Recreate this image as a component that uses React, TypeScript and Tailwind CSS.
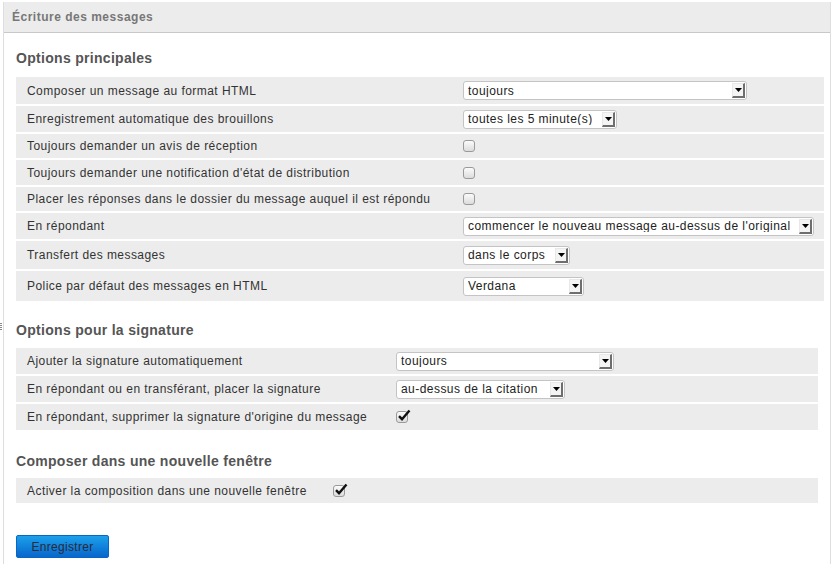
import React from "react";

// ─── Types ───────────────────────────────────────────────────────────────────

type Control =
  | { kind: "select"; value: string; width: number }
  | { kind: "checkbox"; checked: boolean };

interface Row {
  label: string;
  height: number;
  control: Control;
}

interface Section {
  title: string;
  labelWidth: number;
  tableWidth: number;
  rows: Row[];
}

const SECTIONS: Section[] = [
  {
    title: "Options principales",
    labelWidth: 446,
    tableWidth: 808,
    rows: [
      { label: "Composer un message au format HTML", height: 27, control: { kind: "select", value: "toujours", width: 284 } },
      { label: "Enregistrement automatique des brouillons", height: 26, control: { kind: "select", value: "toutes les 5 minute(s)", width: 154 } },
      { label: "Toujours demander un avis de réception", height: 24, control: { kind: "checkbox", checked: false } },
      { label: "Toujours demander une notification d'état de distribution", height: 25, control: { kind: "checkbox", checked: false } },
      { label: "Placer les réponses dans le dossier du message auquel il est répondu", height: 24, control: { kind: "checkbox", checked: false } },
      { label: "En répondant", height: 26, control: { kind: "select", value: "commencer le nouveau message au-dessus de l'original", width: 351 } },
      { label: "Transfert des messages", height: 28, control: { kind: "select", value: "dans le corps", width: 107 } },
      { label: "Police par défaut des messages en HTML", height: 30, control: { kind: "select", value: "Verdana", width: 121 } },
    ],
  },
  {
    title: "Options pour la signature",
    labelWidth: 379,
    tableWidth: 802,
    rows: [
      { label: "Ajouter la signature automatiquement", height: 26, control: { kind: "select", value: "toujours", width: 218 } },
      { label: "En répondant ou en transférant, placer la signature", height: 26, control: { kind: "select", value: "au-dessus de la citation", width: 169 } },
      { label: "En répondant, supprimer la signature d'origine du message", height: 26, control: { kind: "checkbox", checked: true } },
    ],
  },
  {
    title: "Composer dans une nouvelle fenêtre",
    labelWidth: 316,
    tableWidth: 802,
    rows: [
      { label: "Activer la composition dans une nouvelle fenêtre", height: 25, control: { kind: "checkbox", checked: true } },
    ],
  },
];

// ─── Controls ────────────────────────────────────────────────────────────────

function FakeSelect({ value, width }: { value: string; width: number }) {
  return (
    <div
      className="h-[19px] flex items-center bg-white border border-[#c4c4c4] rounded-[3px] pl-[4px] pr-[1px]"
      style={{ width }}
    >
      <span className="flex-1 text-[12px] tracking-[0.45px] leading-none text-[#222] whitespace-nowrap overflow-hidden">
        {value}
      </span>
      {/* 3D dropdown button */}
      <span className="w-[13px] h-[15px] shrink-0 flex items-center justify-center bg-[#f4f4f4] border-t border-l border-[#e8e8e8] border-r-2 border-b-2 border-r-[#6e6e6e] border-b-[#6e6e6e]">
        <svg width="7" height="4" viewBox="0 0 7 4" aria-hidden="true">
          <path d="M0 0h7L3.5 4z" fill="#000" />
        </svg>
      </span>
    </div>
  );
}

function FakeCheckbox({ checked }: { checked: boolean }) {
  return (
    <span className="relative w-[12px] h-[12px] block rounded-[3px] border border-[#9a9a9a] bg-gradient-to-b from-[#fbfbfb] to-[#dcdcdc]">
      {checked && (
        <svg
          className="absolute left-[0px] top-[-3px]"
          width="14"
          height="13"
          viewBox="0 0 14 13"
          aria-hidden="true"
        >
          <path d="M2 7.2 L5 10.2 L12.5 1.5" fill="none" stroke="#111" strokeWidth="2.4" strokeLinejoin="miter" />
        </svg>
      )}
    </span>
  );
}

// ─── Section table ───────────────────────────────────────────────────────────

function OptionsTable({ section }: { section: Section }) {
  return (
    <div className="flex flex-col gap-[2px]" style={{ width: section.tableWidth }}>
      {section.rows.map((row) => (
        <div key={row.label} className="flex items-center bg-[#ececec]" style={{ height: row.height }}>
          <div
            className="shrink-0 pl-[11px] text-[12px] tracking-[0.45px] text-[#333] whitespace-nowrap"
            style={{ width: section.labelWidth }}
          >
            {row.label}
          </div>
          <div className="flex-1 flex items-center pl-[1px]">
            {row.control.kind === "select" ? (
              <FakeSelect value={row.control.value} width={row.control.width} />
            ) : (
              <FakeCheckbox checked={row.control.checked} />
            )}
          </div>
        </div>
      ))}
    </div>
  );
}

// ─── App ─────────────────────────────────────────────────────────────────────

export default function App() {
  return (
    <div className="relative w-[834px] h-[564px] bg-white overflow-hidden pt-[2px] font-['Liberation_Sans',Arial,sans-serif]">
      {/* splitter grip */}
      <div className="absolute left-0 top-[323px] w-[2px] h-[7px] bg-[repeating-linear-gradient(to_bottom,#888_0,#888_1px,transparent_1px,transparent_2px)]" />

      <div className="ml-[3px] w-[828px] h-[562px] border-l border-r border-[#dedede]">
        {/* Panel header */}
        <div className="h-[31px] flex items-center pl-[8px] bg-[#ececec] border-b border-[#c8c8c8]">
          <span className="text-[12px] tracking-[0.5px] font-bold text-[#777]">Écriture des messages</span>
        </div>

        <div className="pl-[12px]">
          <h2 className="mt-[17px] mb-[11px] h-[16px] leading-[16px] text-[14px] tracking-[0.3px] font-bold text-[#555]">
            {SECTIONS[0].title}
          </h2>
          <OptionsTable section={SECTIONS[0]} />

          <h2 className="mt-[21px] mb-[10px] h-[16px] leading-[16px] text-[14px] tracking-[0.3px] font-bold text-[#555]">
            {SECTIONS[1].title}
          </h2>
          <OptionsTable section={SECTIONS[1]} />

          <h2 className="mt-[23px] mb-[9px] h-[16px] leading-[16px] text-[14px] tracking-[0.3px] font-bold text-[#555]">
            {SECTIONS[2].title}
          </h2>
          <OptionsTable section={SECTIONS[2]} />

          <button
            type="button"
            className="mt-[32px] w-[93px] h-[23px] rounded-[2px] border border-[#0a66c4] bg-gradient-to-b from-[#1ea0ea] to-[#0a66cc] text-[12px] tracking-[0.3px] text-[#2a2a3a] leading-none"
          >
            Enregistrer
          </button>
        </div>
      </div>
    </div>
  );
}
